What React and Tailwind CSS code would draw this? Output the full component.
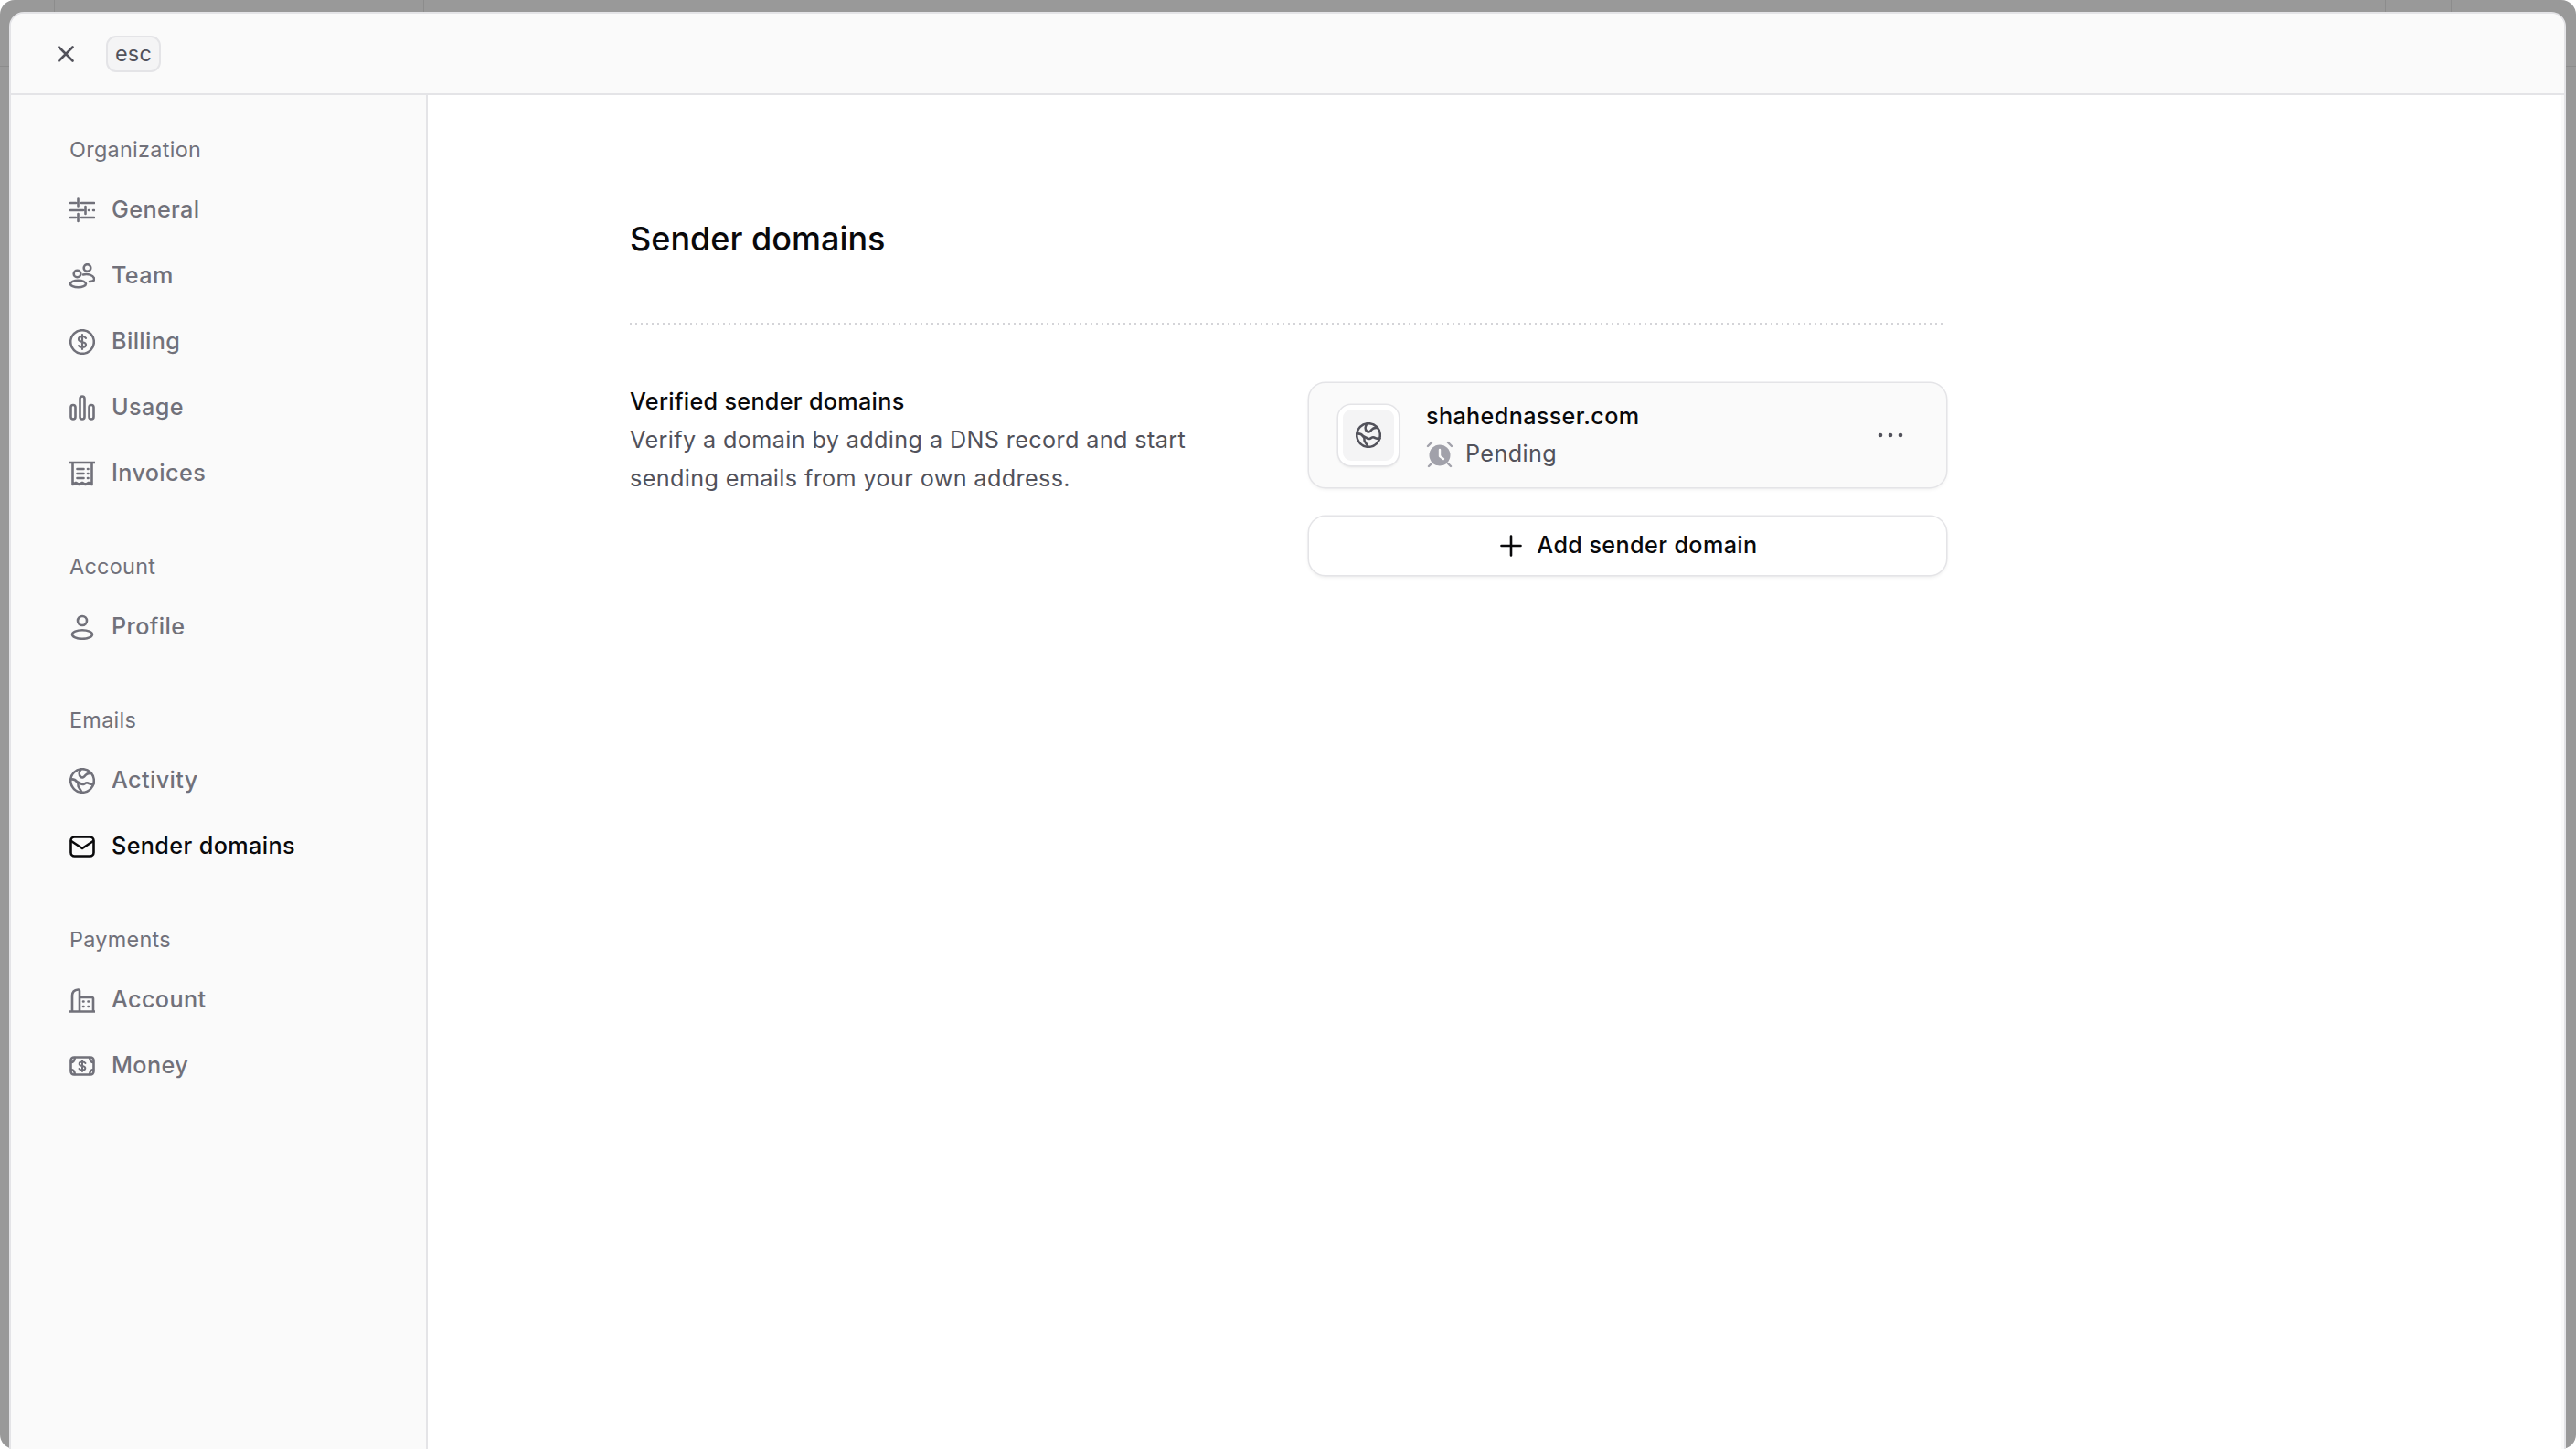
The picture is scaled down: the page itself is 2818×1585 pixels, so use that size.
const S = ({ children, size = 28, className = "" }) => (
  <svg width={size} height={size} viewBox="0 0 28 28" fill="none" stroke="currentColor" strokeWidth="2.600" strokeLinecap="round" strokeLinejoin="round" className={"shrink-0 " + className}>{children}</svg>
);
const Sliders = () => <S><path d="M1 6h6M13 6h14M9.500 1.500v8M1 14h14M21 14h.5M26 14h1M17.500 10v8M1 22h6M13 22h14M9.500 18v8" /></S>;
const Team = () => <S><circle cx="8.500" cy="11.500" r="3.800" /><circle cx="19.500" cy="5" r="3.800" /><ellipse cx="9.500" cy="22.500" rx="8.500" ry="3.800" /><path d="M15 12.500c5-1.500 11 .5 12 4 .5 2.500-1.500 3.500-5 3.500" /></S>;
const Billing = () => <S><circle cx="14" cy="14" r="12.800" /><path d="M18 9.800c-.8-1.200-2.200-1.800-4-1.800-2.400 0-4 1.200-4 3s1.600 2.500 4 3 4 1.200 4 3-1.600 3-4 3c-1.800 0-3.200-.6-4-1.800M14 6v16" strokeWidth="2.200" /></S>;
const Usage = () => <S><rect x="1.500" y="11" width="5" height="15.500" rx="2.500" /><rect x="11.500" y="1.500" width="5" height="25" rx="2.500" /><rect x="21.500" y="11" width="5" height="15.500" rx="2.500" /></S>;
const Invoices = () => <S><path d="M0.500 2h27M3.500 2v24l3.500-2 3.500 2 3.500-2 3.500 2 3.500-2 3.500 2V2M8.500 9h7M8.500 14h7M8.500 19h7M20 9h.5M20 14h.5M20 19h.5" /></S>;
const Profile = () => <S><circle cx="14" cy="7" r="5" /><ellipse cx="14" cy="22" rx="11" ry="4.800" /></S>;
const Globe = ({ size = 28 }) => (
  <S size={size}>
    <circle cx="14" cy="14" r="12.800" />
    <path d="M12.500 1.500c-2 2.500-2.500 6-.5 8s4 .5 5.500-1.500 3.500-2.500 6.500-2" />
    <path d="M1.500 12.500c3-.5 5 .5 6.500 2.500s2 2 1.500 4 2 3 3.500 7" />
    <path d="M8 15c3 1 5 3.500 7 3s3-2.500 5-1.500 4 2 6.500 1" />
  </S>
);
const Mail = () => <S><rect x="1.500" y="3.500" width="25" height="21" rx="4" /><path d="M2 8l12 8 12-8" /></S>;
const Building = () => <S><path d="M0.500 26.500h27M3 26V9c0-3.500 2-6 6.500-6.500 1-.100 1.500.500 1.500 1.500v22M11 11h13.500a1.500 1.500 0 0 1 1.500 1.500V26M15 15.500h.5M20.500 15.500h.5M15 21h.5M20.500 21h.5" /></S>;
const Money = () => (
  <S>
    <rect x="1.500" y="4.500" width="25" height="19" rx="3.500" />
    <path d="M17.500 11c-.6-1-1.800-1.500-3.500-1.500-2 0-3.300.9-3.300 2.200s1.300 1.900 3.300 2.300 3.300 1 3.300 2.300-1.300 2.200-3.300 2.200c-1.700 0-2.900-.5-3.500-1.500M14 8v12" strokeWidth="2" />
    <path d="M2 10c2 0 3.500-2 4-5M2 18c2 0 3.500 2 4 5M26 10c-2 0-3.500-2-4-5M26 18c-2 0-3.500 2-4 5" strokeWidth="2.400" />
  </S>
);

const groups = [
  { title: "Organization", items: [["General", Sliders], ["Team", Team], ["Billing", Billing], ["Usage", Usage], ["Invoices", Invoices]] },
  { title: "Account", items: [["Profile", Profile]] },
  { title: "Emails", items: [["Activity", Globe], ["Sender domains", Mail, true]] },
  { title: "Payments", items: [["Account", Building], ["Money", Money]] },
];

export default function App() {
  return (
    <div className="relative w-[2818px] h-[1585px] overflow-hidden bg-white font-['Inter',sans-serif]">
      <div className="relative h-full rounded-[16px] bg-[#999999] pt-[13px] pl-[10px] pr-[11px]">
        <span className="absolute left-[59px] top-0 h-[13px] w-px bg-[#8c8c8c]" />
        <span className="absolute left-[463px] top-0 h-[13px] w-px bg-[#8c8c8c]" />
        <span className="absolute left-[2609px] top-0 h-[13px] w-px bg-[#8c8c8c]" />
        <span className="absolute left-[2681px] top-0 h-[13px] w-px bg-[#8c8c8c]" />
        <span className="absolute left-[2753px] top-0 h-[13px] w-px bg-[#8c8c8c]" />
        <span className="absolute left-0 top-[72px] h-px w-[10px] bg-[#8c8c8c]" />
        <span className="absolute right-0 top-[72px] h-px w-[11px] bg-[#8c8c8c]" />
        <div className="flex h-[1600px] flex-col overflow-hidden rounded-t-[16px] bg-white border-t-2 border-x-2 border-[#e4e4e7]">
          <header className="flex h-[89px] shrink-0 items-center gap-[35px] border-b-2 border-[#e4e4e7] bg-[#fafafa] pl-[51px]">
            <svg width="18" height="18" viewBox="0 0 18 18" fill="none" stroke="#52525b" strokeWidth="2.600" strokeLinecap="round" className="shrink-0"><path d="M1.500 1.500l15 15M16.500 1.500l-15 15" /></svg>
            <span className="flex h-[40px] w-[60px] items-center justify-center rounded-[11px] border-2 border-[#e4e4e7] bg-[#f4f4f5] text-[23.400px] tracking-[0.3px] text-[#52525b]">esc</span>
          </header>
          <div className="flex flex-1">
            <aside className="w-[456px] shrink-0 border-r-2 border-[#e4e4e7] bg-[#fafafa] pl-[64px] pt-[42px]">
              <nav className="flex flex-col gap-[48px]">
                {groups.map((g) => (
                  <section key={g.title} className="flex flex-col">
                    <h3 className="flex h-[36px] items-center text-[23.400px] tracking-[0.3px] text-[#71717a]">{g.title}</h3>
                    <ul className="flex flex-col pt-[12px]">
                      {g.items.map(([label, Icon, active]) => (
                        <li key={label} className={"flex h-[72px] items-center gap-[18px] text-[25.200px] tracking-[0.38px] font-[450] " + (active ? "text-[#09090b]" : "text-[#71717a]")}>
                          <Icon />
                          <span>{label}</span>
                        </li>
                      ))}
                    </ul>
                  </section>
                ))}
              </nav>
            </aside>
            <main className="flex-1 border-r-[3px] border-[#fafafa] pl-[221px] pt-[129px]">
              <div className="w-[1437px]">
                <h1 className="text-[36px] leading-[56px] font-[450] text-[#09090b]">Sender domains</h1>
                <div className="mt-[64px] h-[2px] w-[1440px] bg-[repeating-linear-gradient(90deg,#d4d4d8_0,#d4d4d8_2px,transparent_2px,transparent_6px)]" />
                <div className="mt-[64px] flex">
                  <div className="-mt-[1px] w-[743px] shrink-0">
                    <h2 className="text-[25.200px] leading-[42px] tracking-[0.3px] font-[450] text-[#09090b]">Verified sender domains</h2>
                    <p className="w-[640px] text-[25.200px] leading-[42px] tracking-[0.38px] text-[#52525b]">Verify a domain by adding a DNS record and start sending emails from your own address.</p>
                  </div>
                  <div className="flex w-[697px] shrink-0 flex-col gap-[32px]">
                    <div className="flex h-[114px] items-center rounded-[18px] bg-[#fafafa] pl-[32px] pr-[47px] shadow-[0_0_0_1.500px_#e4e4e7,0_2px_4px_rgba(0,0,0,0.08)]">
                      <div className="flex h-[66px] w-[66px] items-center justify-center rounded-[14px] border-[5px] border-white bg-[#f4f4f5] text-[#52525b] shadow-[0_0_0_1.500px_#e4e4e7,0_2px_3px_rgba(0,0,0,0.1)]">
                        <Globe size={28} />
                      </div>
                      <div className="ml-[30px] flex flex-1 flex-col">
                        <span className="text-[25.200px] leading-[41px] tracking-[0.35px] font-[450] text-[#09090b]">shahednasser.com</span>
                        <span className="flex items-center gap-[13px] text-[25.200px] leading-[41px] tracking-[0.38px] text-[#52525b]">
                          <svg width="30" height="30" viewBox="0 0 30 30" className="shrink-0" fill="#a1a1aa">
                            <circle cx="15" cy="16" r="11.500" />
                            <path d="M15 10v7l4 3" fill="none" stroke="#fafafa" strokeWidth="2.400" strokeLinecap="round" strokeLinejoin="round" />
                            <path d="M2 6l4-4M28 6l-4-4M6 25l-3 3M24 25l3 3" fill="none" stroke="#a1a1aa" strokeWidth="2.400" strokeLinecap="round" />
                          </svg>
                          Pending
                        </span>
                      </div>
                      <svg width="28" height="8" viewBox="0 0 28 8" fill="#52525b" className="shrink-0"><circle cx="3" cy="4" r="2.300" /><circle cx="14" cy="4" r="2.300" /><circle cx="25" cy="4" r="2.300" /></svg>
                    </div>
                    <button className="flex h-[64px] items-center justify-center gap-[16px] rounded-[18px] bg-white pl-[3px] text-[25.200px] tracking-[0.38px] font-[450] text-[#09090b] shadow-[0_0_0_1.500px_#e4e4e7,0_2px_4px_rgba(0,0,0,0.1)]">
                      <svg width="24" height="24" viewBox="0 0 24 24" fill="none" stroke="#09090b" strokeWidth="2.600" strokeLinecap="round" className="shrink-0"><path d="M12 1.500v21M1.500 12h21" /></svg>
                      Add sender domain
                    </button>
                  </div>
                </div>
              </div>
            </main>
          </div>
        </div>
      </div>
    </div>
  );
}
